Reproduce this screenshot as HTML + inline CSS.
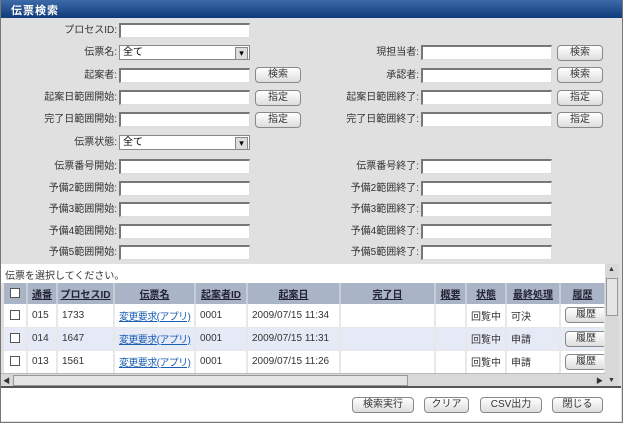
<!DOCTYPE html>
<html><head><meta charset="utf-8"><style>
*{box-sizing:border-box;margin:0;padding:0}
body{width:623px;height:423px;background:#e0e0e0;font-family:"Liberation Sans","Noto Sans CJK JP",sans-serif;font-size:10px;color:#333;position:relative;overflow:hidden}
.frame{position:absolute;left:0;top:0;width:623px;height:423px;border:1px solid #777;border-top:none}
.title{position:absolute;left:0;top:0;width:623px;height:18px;background:linear-gradient(#3d6aa8,#0f3a7a);color:#fff;font-weight:bold;font-size:11px;padding:2px 0 0 11px;letter-spacing:1px}
.lbl{position:absolute;text-align:right;width:200px;font-size:10px;color:#333;line-height:15px}
.inp{position:absolute;width:131px;height:15px;background:#fff;border:1px solid #ddd;border-top:2px solid #777;border-left:2px solid #777}
.sel{position:absolute;width:131px;height:15px;background:#fff;border:1px solid #888;font-size:10px;padding-left:3px;line-height:13px;color:#000}
.sel:after{content:"▾";position:absolute;right:1px;top:1px;width:11px;height:11px;background:#ddd;border:1px solid #888;font-size:9px;line-height:10px;text-align:center}
.btn{position:absolute;height:16px;border:1px solid #888;border-radius:4px;background:linear-gradient(#fff,#ddd);font-size:10px;text-align:center;line-height:14px;color:#333;white-space:nowrap}
.msg{position:absolute;left:1px;top:264px;width:604px;height:19px;background:#fff;padding:3px 4px;font-size:10px}
.tw{position:absolute;left:4px;top:283px;width:601px;height:90px;overflow:hidden}
table{border-collapse:collapse;table-layout:fixed;width:601px}
th{background:#a9b4c6;height:21px;font-size:10px;text-decoration:underline;color:#223;border-right:2px solid #c8ced8;font-weight:bold;white-space:nowrap;overflow:hidden;padding:0}
td{height:23px;font-size:10px;border-right:2px solid #e8e8e8;padding:0 0 0 4px;border-bottom:1px solid #e6e6e6;color:#333;white-space:nowrap;overflow:hidden}
tr.a td{background:#fff}tr.b td{background:#e6eaf6}
td a{color:#1a5fb4;text-decoration:underline;letter-spacing:-0.6px}
.cb{display:inline-block;width:10px;height:10px;border:1px solid #555;background:#fff;vertical-align:middle}
.hb{position:absolute;left:1px;top:373px;width:604px;height:13px;background:#d8d8d8;border-top:1px solid #bbb}
.vb{position:absolute;left:605px;top:264px;width:14px;height:122px;background:#d8d8d8}
.bot{position:absolute;left:1px;top:386px;width:620px;height:35px;background:#fff;border-top:2px solid #555}
.rb{position:relative;display:inline-block;width:42px;height:16px;border:1px solid #888;border-radius:4px;background:linear-gradient(#fff,#ddd);text-align:center;line-height:14px}
</style></head><body>
<div class="title">伝票検索</div>

<div class="lbl" style="left:-83px;top:23px">プロセスID:</div><div class="inp" style="left:119px;top:23px"></div>
<div class="lbl" style="left:-83px;top:45px">伝票名:</div><div class="sel" style="left:119px;top:45px">全て</div>
<div class="lbl" style="left:-83px;top:68px">起案者:</div><div class="inp" style="left:119px;top:68px"></div><div class="btn" style="left:255px;top:67px;width:46px">検索</div>
<div class="lbl" style="left:-83px;top:90px">起案日範囲開始:</div><div class="inp" style="left:119px;top:90px"></div><div class="btn" style="left:255px;top:90px;width:46px">指定</div>
<div class="lbl" style="left:-83px;top:112px">完了日範囲開始:</div><div class="inp" style="left:119px;top:112px"></div><div class="btn" style="left:255px;top:112px;width:46px">指定</div>
<div class="lbl" style="left:-83px;top:135px">伝票状態:</div><div class="sel" style="left:119px;top:135px">全て</div>
<div class="lbl" style="left:-83px;top:159px">伝票番号開始:</div><div class="inp" style="left:119px;top:159px"></div>
<div class="lbl" style="left:-83px;top:181px">予備2範囲開始:</div><div class="inp" style="left:119px;top:181px"></div>
<div class="lbl" style="left:-83px;top:202px">予備3範囲開始:</div><div class="inp" style="left:119px;top:202px"></div>
<div class="lbl" style="left:-83px;top:224px">予備4範囲開始:</div><div class="inp" style="left:119px;top:224px"></div>
<div class="lbl" style="left:-83px;top:245px">予備5範囲開始:</div><div class="inp" style="left:119px;top:245px"></div>

<div class="lbl" style="left:219px;top:45px">現担当者:</div><div class="inp" style="left:421px;top:45px"></div><div class="btn" style="left:557px;top:45px;width:46px">検索</div>
<div class="lbl" style="left:219px;top:68px">承認者:</div><div class="inp" style="left:421px;top:68px"></div><div class="btn" style="left:557px;top:67px;width:46px">検索</div>
<div class="lbl" style="left:219px;top:90px">起案日範囲終了:</div><div class="inp" style="left:421px;top:90px"></div><div class="btn" style="left:557px;top:90px;width:46px">指定</div>
<div class="lbl" style="left:219px;top:112px">完了日範囲終了:</div><div class="inp" style="left:421px;top:112px"></div><div class="btn" style="left:557px;top:112px;width:46px">指定</div>
<div class="lbl" style="left:219px;top:159px">伝票番号終了:</div><div class="inp" style="left:421px;top:159px"></div>
<div class="lbl" style="left:219px;top:181px">予備2範囲終了:</div><div class="inp" style="left:421px;top:181px"></div>
<div class="lbl" style="left:219px;top:202px">予備3範囲終了:</div><div class="inp" style="left:421px;top:202px"></div>
<div class="lbl" style="left:219px;top:224px">予備4範囲終了:</div><div class="inp" style="left:421px;top:224px"></div>
<div class="lbl" style="left:219px;top:245px">予備5範囲終了:</div><div class="inp" style="left:421px;top:245px"></div>

<div class="msg">伝票を選択してください。</div>
<div class="tw"><table>
<colgroup><col style="width:23px"><col style="width:30px"><col style="width:57px"><col style="width:81px"><col style="width:52px"><col style="width:93px"><col style="width:95px"><col style="width:31px"><col style="width:40px"><col style="width:54px"><col style="width:45px"></colgroup>
<tr><th><span class="cb"></span></th><th>通番</th><th>プロセスID</th><th>伝票名</th><th>起案者ID</th><th>起案日</th><th>完了日</th><th>概要</th><th>状態</th><th>最終処理</th><th>履歴</th></tr>
<tr class="a"><td style="padding-left:6px"><span class="cb"></span></td><td>015</td><td>1733</td><td><a>変更要求(アプリ)</a></td><td>0001</td><td>2009/07/15 11:34</td><td></td><td></td><td>回覧中</td><td>可決</td><td><span class="rb">履歴</span></td></tr>
<tr class="b"><td style="padding-left:6px"><span class="cb"></span></td><td>014</td><td>1647</td><td><a>変更要求(アプリ)</a></td><td>0001</td><td>2009/07/15 11:31</td><td></td><td></td><td>回覧中</td><td>申請</td><td><span class="rb">履歴</span></td></tr>
<tr class="a"><td style="padding-left:6px"><span class="cb"></span></td><td>013</td><td>1561</td><td><a>変更要求(アプリ)</a></td><td>0001</td><td>2009/07/15 11:26</td><td></td><td></td><td>回覧中</td><td>申請</td><td><span class="rb">履歴</span></td></tr>
</table></div>
<div class="hb"><div style="position:absolute;left:12px;top:1px;width:395px;height:11px;background:#e4e4e4;border:1px solid #999"></div><div style="position:absolute;left:2px;top:2px;font-size:7px">◀</div><div style="position:absolute;right:2px;top:2px;font-size:7px">▶</div></div>
<div class="vb"><div style="position:absolute;left:1px;top:14px;width:12px;height:38px;background:#e4e4e4;border:1px solid #999"></div><div style="position:absolute;left:3px;top:2px;font-size:7px">▲</div><div style="position:absolute;left:3px;bottom:2px;font-size:7px">▼</div></div>
<div class="bot">
<div class="btn" style="left:351px;top:9px;width:62px">検索実行</div>
<div class="btn" style="left:423px;top:9px;width:45px">クリア</div>
<div class="btn" style="left:479px;top:9px;width:62px">CSV出力</div>
<div class="btn" style="left:551px;top:9px;width:51px">閉じる</div>
</div>
<div class="frame"></div>
</body></html>
